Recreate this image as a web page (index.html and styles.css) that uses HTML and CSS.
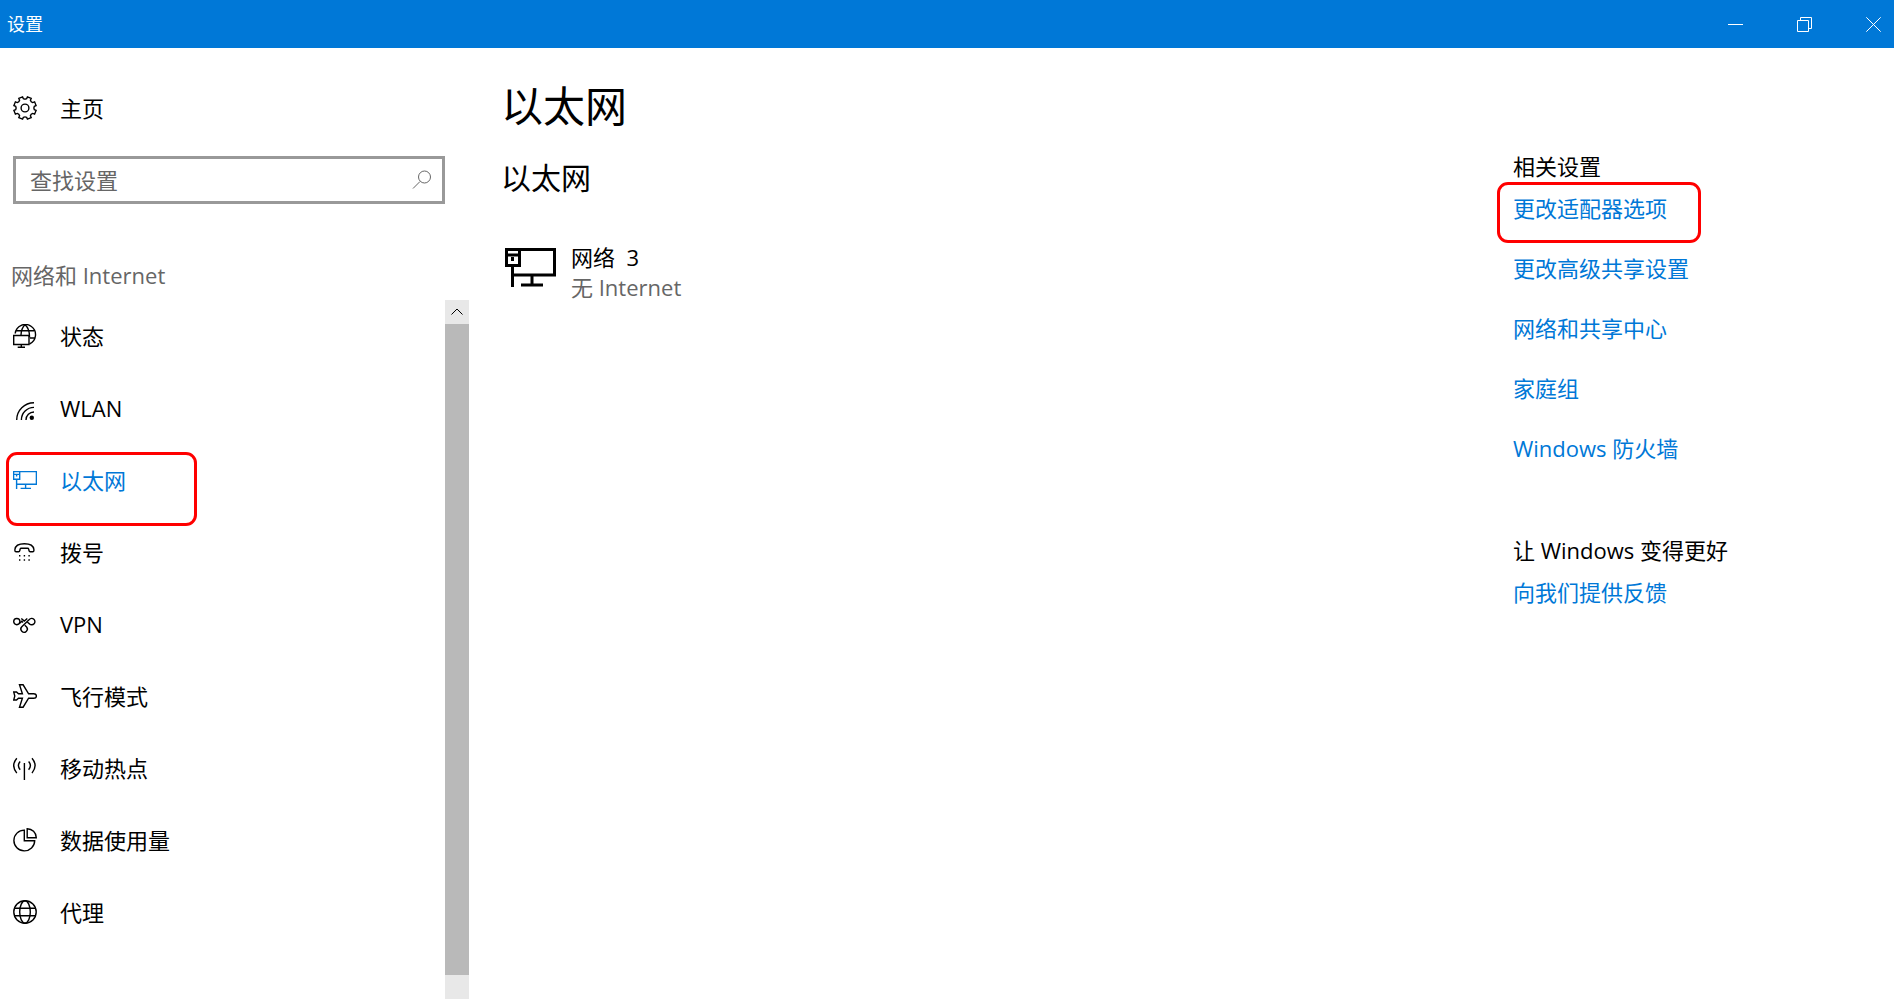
FILE: index.html
```html
<!DOCTYPE html>
<html lang="zh-CN">
<head>
<meta charset="utf-8">
<title>设置</title>
<link rel="stylesheet" href="styles.css">
</head>
<body>
<header class="titlebar">
  <span class="titlebar-name">设置</span>
  <div class="window-buttons">
    <button class="window-button" type="button" aria-label="最小化"><svg viewBox="0 0 15 15"><path d="M0 7.5h15"/></svg></button>
    <button class="window-button" type="button" aria-label="还原"><svg viewBox="0 0 15 15"><path d="M.5 3.5h11v11H.5zM3.500 3.500V.5h11v11h-3"/></svg></button>
    <button class="window-button" type="button" aria-label="关闭"><svg viewBox="0 0 15 15"><path d="M.3.3l14.400 14.400M14.700.3L.3 14.700"/></svg></button>
  </div>
</header>
<div class="window">
  <aside class="sidebar">
    <a class="nav-item home" href="#home">
      <svg class="icon" viewBox="-12 -12 24 24"><path d="M11.100 2.400L9.300 1.600Q8.400 0 9.300-1.600L11.100-2.400 9.600-6.200 7.700-5.400Q5.900-5.900 5.400-7.700L6.200-9.600 2.400-11.100 1.600-9.300Q0-8.400-1.600-9.300L-2.400-11.100-6.200-9.600-5.400-7.700Q-5.900-5.900-7.700-5.400L-9.600-6.200-11.100-2.400-9.300-1.600Q-8.400 0-9.300 1.600L-11.100 2.400-9.600 6.200-7.700 5.400Q-5.900 5.900-5.400 7.700L-6.200 9.600-2.400 11.100-1.600 9.300Q0 8.400 1.600 9.300L2.400 11.100 6.200 9.600 5.400 7.700Q5.900 5.900 7.700 5.400L9.600 6.200Z"/><circle r="3.900"/></svg>
      <span>主页</span>
    </a>
    <label class="search">
      <input class="search-input" type="text" placeholder="查找设置" aria-label="查找设置">
      <svg class="search-icon" viewBox="0 0 20 20"><circle cx="12.500" cy="7" r="6"/><path d="M8 11.500L1 18.500"/></svg>
    </label>
    <h2 class="category">网络和 Internet</h2>
    <div class="nav-scroll">
      <nav class="nav-list">
        <a class="nav-item" href="#status">
          <svg class="icon" viewBox="0 0 24 24"><path d="M2.200 9.500A10.200 10.200 0 1 1 16.500 20M3 6.700h18M17 14h4.700M12 .8C9.500 3 8.300 6 8 11M12 .8c3 2.500 4.600 7 4.500 12.500"/><path d="M.7 11.500h15.300v9H.7zM8.300 20.500v3M4.700 23.300h7.300"/></svg>
          <span>状态</span>
        </a>
        <a class="nav-item" href="#wlan">
          <svg class="icon" viewBox="0 0 24 24"><path d="M3.700 24A17.300 17.300 0 0 1 21 6.700M8.400 24A12.600 12.600 0 0 1 21 11.400M13 24a8 8 0 0 1 8-8"/><circle class="solid-only" cx="18.800" cy="21.700" r="2.200"/></svg>
          <span>WLAN</span>
        </a>
        <a class="nav-item current marked" href="#ethernet" aria-current="page">
          <svg class="icon" viewBox="0 0 24 24"><path d="M.6 3.600h6.100v7.600H.6zM.6 6.400h6.100M6.700 3.600h16.700v12.700H3.600M3.600 11.200V21M12.600 16.300v4M7.600 20.400H18M3.600 7v1.500"/></svg>
          <span>以太网</span>
        </a>
        <a class="nav-item" href="#dialup">
          <svg class="icon" viewBox="0 0 24 24"><path d="M1.900 9.500C2.300 5.500 6 3.700 11.400 3.700s9.100 1.800 9.500 5.800v1q0 1.200-1.200 1.200h-2.500q-1 0-1.200-1l-.3-1.500q-.2-.9-1.200-.9H8.300q-1 0-1.200.9l-.3 1.500q-.2 1-1.200 1H3.100q-1.200 0-1.200-1.200z"/><path class="solid-only" d="M6 15h1.400v1.400H6zM10.700 15h1.400v1.400h-1.400zM15.400 15h1.400v1.400h-1.400zM6 19.300h1.400v1.400H6zM10.700 19.300h1.400v1.400h-1.400zM15.400 19.300h1.400v1.400h-1.400z"/></svg>
          <span>拨号</span>
        </a>
        <a class="nav-item" href="#vpn">
          <svg class="icon" viewBox="0 0 24 24"><circle cx="3.800" cy="9.600" r="3.100"/><path d="M8.300 6.500l3 2.600 3-2.600M6.300 11.500L8.800 9.300 10 10.500M8.800 14.800L16.300 7.500A3.200 3.200 0 1 1 16.500 11.900L14.500 10.300M8.800 14.800A3.200 3.200 0 1 0 13.600 15L11.800 13.300"/></svg>
          <span>VPN</span>
        </a>
        <a class="nav-item" href="#airplane">
          <svg class="icon" viewBox="0 0 24 24"><path d="M.7 8h2.800l2 1.800h3.900L6.500.8h3.600l5.500 9h5.200q2.600 0 2.600 2.200t-2.600 2.200h-5.200l-5.500 9H6.500l2.900-9H5.500l-2 1.800H.7L1.800 12z"/></svg>
          <span>飞行模式</span>
        </a>
        <a class="nav-item" href="#hotspot">
          <svg class="icon" viewBox="0 0 24 24"><path d="M11.400 7v17M7.200 5.500q-3.600 4 0 8.300M3.800 2.200q-6.200 7.300 0 14.900M15.600 5.500q3.600 4 0 8.300M19 2.200q6.200 7.300 0 14.900"/></svg>
          <span>移动热点</span>
        </a>
        <a class="nav-item" href="#data">
          <svg class="icon" viewBox="0 0 24 24"><path d="M11.300 2.100A10.400 10.400 0 1 0 21.700 12.700H11.300zM14.200.7A9.200 9.200 0 0 1 23.300 9.700H14.200z"/></svg>
          <span>数据使用量</span>
        </a>
        <a class="nav-item" href="#proxy">
          <svg class="icon" viewBox="0 0 24 24"><circle cx="12" cy="12" r="11.200"/><ellipse cx="12" cy="12" rx="5.300" ry="11.200"/><path d="M1.600 8.200h20.800M1.600 15.800h20.800"/></svg>
          <span>代理</span>
        </a>
      </nav>
      <div class="scrollbar">
        <button class="scroll-up" type="button" aria-label="向上滚动"><svg viewBox="0 0 24 24"><path d="M6.500 14.500L12 9l5.500 5.500"/></svg></button>
        <div class="scroll-thumb"></div>
      </div>
    </div>
  </aside>
  <main class="content">
    <h1 class="page-title">以太网</h1>
    <h2 class="section-title">以太网</h2>
    <div class="network">
      <svg class="network-icon" viewBox="0 0 51 39"><path d="M1.500 1.500h13v16h-13zM1.500 7h13M14.500 1.500h35v25.500h-42M7.500 17.500V39M27 27v10M16 37h22M7.500 9v4"/></svg>
      <div class="network-text">
        <div class="network-name">网络&nbsp; 3</div>
        <div class="network-state">无 Internet</div>
      </div>
    </div>
  </main>
  <aside class="related">
    <h3 class="related-title">相关设置</h3>
    <ul class="related-links">
      <li><a class="link marked" href="#adapter">更改适配器选项</a></li>
      <li><a class="link" href="#sharing">更改高级共享设置</a></li>
      <li><a class="link" href="#center">网络和共享中心</a></li>
      <li><a class="link" href="#homegroup">家庭组</a></li>
      <li><a class="link" href="#firewall">Windows 防火墙</a></li>
    </ul>
    <h3 class="related-title">让 Windows 变得更好</h3>
    <ul class="related-links">
      <li><a class="link" href="#feedback">向我们提供反馈</a></li>
    </ul>
  </aside>
</div>
</body>
</html>
```
FILE: styles.css
```css
*,
*::before,
*::after {
  box-sizing: border-box;
}

body {
  margin: 0;
  height: 100vh;
  display: flex;
  flex-direction: column;
  background: #fff;
  color: #000;
  font-family: "Open Sans", "Noto Sans CJK SC", sans-serif;
  font-size: 22px;
  line-height: 30px;
  font-weight: 400;
  overflow: hidden;
}

h1, h2, h3, ul {
  margin: 0;
  padding: 0;
  font-weight: inherit;
  font-size: inherit;
}

ul {
  list-style: none;
}

a {
  color: inherit;
  text-decoration: none;
}

button {
  padding: 0;
  border: 0;
  background: none;
}

svg {
  display: block;
  fill: none;
  stroke: currentColor;
}

.titlebar {
  flex: none;
  height: 48px;
  padding: 0 13px 0 7px;
  display: flex;
  justify-content: space-between;
  align-items: center;
  background: #0078d7;
  color: #fff;
  font-size: 18px;
}

.window-buttons {
  display: flex;
  gap: 54px;
}

.window-button {
  width: 15px;
  height: 48px;
  color: #fff;
}

.window-button svg {
  width: 15px;
  height: 15px;
}

.window {
  flex: 1;
  min-height: 0;
  display: flex;
}

.sidebar {
  flex: none;
  width: 469px;
  padding-top: 24px;
  display: flex;
  flex-direction: column;
}

.nav-item {
  position: relative;
  height: 72px;
  padding-left: 13px;
  display: flex;
  align-items: center;
  gap: 23px;
}

.icon {
  width: 24px;
  height: 24px;
  stroke-width: 1.4;
}

.solid-only {
  fill: currentColor;
  stroke: none;
}

.current,
.link {
  color: #0078d7;
}

.search {
  margin: 12px 24px 0 13px;
  height: 48px;
  padding: 0 10px 0 14px;
  display: flex;
  align-items: center;
  border: 3px solid #999;
  color: #666;
}

.search-input {
  flex: 1;
  min-width: 0;
  padding: 0;
  border: 0;
  outline: 0;
  background: none;
  font: inherit;
}

.search-input::placeholder {
  color: #666;
  opacity: 1;
}

.search-icon {
  width: 20px;
  height: 20px;
}

.category {
  margin: 56px 11px 10px;
  color: #666;
}

.nav-scroll {
  flex: 1;
  min-height: 0;
  display: flex;
}

.nav-list {
  flex: 1;
}

.scrollbar {
  width: 24px;
  padding-bottom: 24px;
  display: flex;
  flex-direction: column;
  background: #e8e8e8;
}

.scroll-up {
  width: 24px;
  height: 24px;
}

.scroll-thumb {
  flex: 1;
  background: #b9b9b9;
}

.content {
  flex: 1;
  padding: 28px 32px;
}

.page-title {
  font-size: 42px;
  line-height: 60px;
}

.section-title {
  margin-top: 20px;
  font-size: 30px;
  line-height: 44px;
}

.network {
  margin-top: 42px;
  padding-left: 4px;
  display: flex;
  gap: 15px;
}

.network-icon {
  width: 51px;
  height: 39px;
  margin-top: 6px;
  stroke-width: 3;
}

.network-state {
  color: #666;
}

.related {
  flex: none;
  width: 381px;
  padding-top: 103px;
}

.related-links {
  margin: 12px 0 72px;
  display: grid;
  gap: 30px;
}

.link {
  position: relative;
}

/* Red callout around an item */
.marked::after {
  content: "";
  position: absolute;
  border: 3px solid #f00;
  border-radius: 11px;
}

.nav-item.marked::after {
  left: 6px;
  top: 8px;
  width: 191px;
  height: 74px;
}

.link.marked::after {
  left: -16px;
  top: -11px;
  width: 204px;
  height: 61px;
}
```
